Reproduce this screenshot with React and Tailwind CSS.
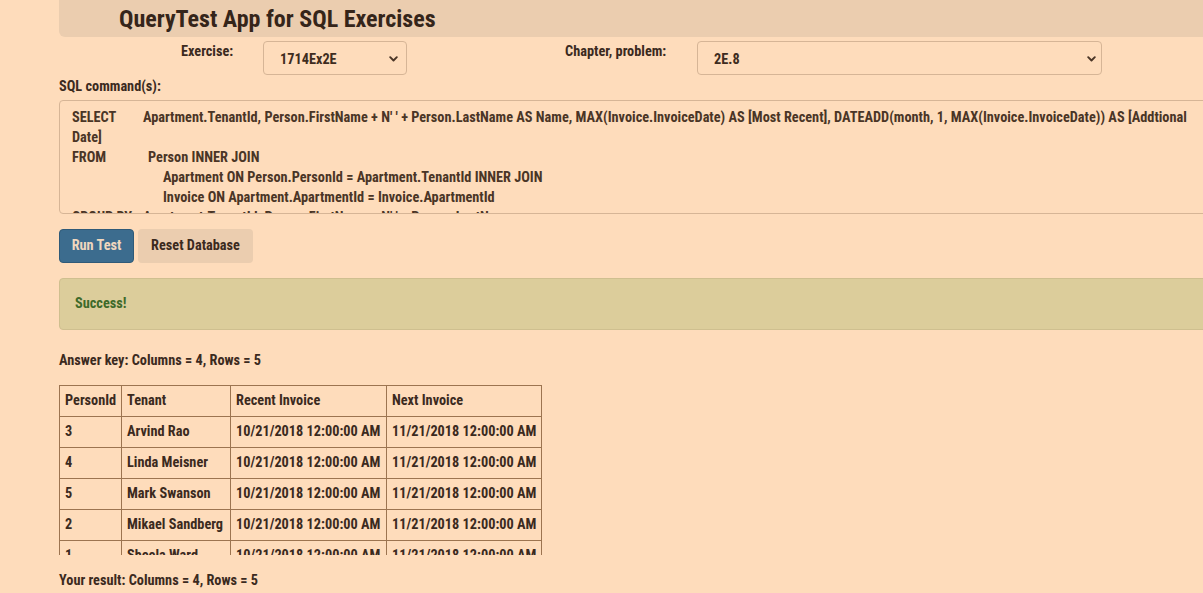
import React from "react";

const F = { fontFamily: '"Roboto Condensed", "Liberation Sans Narrow", "Arial Narrow", Roboto, sans-serif' };

function Select({ value, w, pr }) {
  return (
    <div className={`flex items-center justify-between h-[34px] rounded-[4px] border border-[#d6b596] pl-[16px] ${pr} ${w}`}>
      <span className="text-[14.3px] font-bold text-[#3e2c20] mt-[3px]">{value}</span>
      <svg width="9" height="6" viewBox="0 0 9 6" className="mt-[1px]">
        <path d="M1.2 1.2 L4.5 4.5 L7.8 1.2" fill="none" stroke="#4a3526" strokeWidth="1.9" strokeLinecap="round" strokeLinejoin="round" />
      </svg>
    </div>
  );
}

const rows = [
  ["3", "Arvind Rao"],
  ["4", "Linda Meisner"],
  ["5", "Mark Swanson"],
  ["2", "Mikael Sandberg"],
  ["1", "Sheela Ward"],
];

const cell = "border border-[#9c7450] px-[5px] whitespace-nowrap";

export default function App() {
  return (
    <div style={F} className="w-[1203px] h-[593px] overflow-hidden bg-[#fedcbb] text-[#3b2a1e] font-bold text-[14.3px]">
      <div className="ml-[59px] w-[1200px]">
        <div className="h-[37px] bg-[#ebcdaf] rounded-bl-[6px] pl-[60px] flex items-center">
          <h1 className="text-[24px] leading-none font-bold text-[#35251a]">QueryTest App for SQL Exercises</h1>
        </div>
        <div className="flex mt-[4px] h-[34px]">
          <div className="w-[204px] pl-[122px] pt-[2px] leading-[16px] whitespace-nowrap">Exercise:</div>
          <Select value="1714Ex2E" w="w-[144px]" pr="pr-[8px]" />
          <div className="w-[290px] pl-[158px] pt-[2px] leading-[16px] whitespace-nowrap">Chapter, problem:</div>
          <Select value="2E.8" w="w-[405px]" pr="pr-[5px]" />
        </div>
        <div className="mt-[3px] leading-[16px]">SQL command(s):</div>
        <div className="mt-[6px] h-[114px] border border-[#d6b596] rounded-[4px] overflow-hidden pl-[12px] pt-[6px] leading-[20px] text-[#4a3526] whitespace-nowrap">
          <div className="flex">
            <span className="w-[71px] shrink-0">SELECT</span>
            <span>Apartment.TenantId, Person.FirstName + N' ' + Person.LastName AS Name, MAX(Invoice.InvoiceDate) AS [Most Recent], DATEADD(month, 1, MAX(Invoice.InvoiceDate)) AS [Addtional</span>
          </div>
          <div>Date]</div>
          <div className="flex">
            <span className="w-[76px] shrink-0">FROM</span>
            <span>Person INNER JOIN</span>
          </div>
          <div className="pl-[91px]">Apartment ON Person.PersonId = Apartment.TenantId INNER JOIN</div>
          <div className="pl-[91px]">Invoice ON Apartment.ApartmentId = Invoice.ApartmentId</div>
          <div className="flex">
            <span className="w-[71px] shrink-0">GROUP BY</span>
            <span>Apartment.TenantId, Person.FirstName + N' ' + Person.LastName</span>
          </div>
        </div>
        <div className="flex gap-[4px] mt-[15px]">
          <button className="h-[34px] w-[75px] rounded-[4px] bg-[#3c6c8e] text-[#f0d7be] font-bold border border-[#2f5a78] whitespace-nowrap">Run Test</button>
          <button className="h-[34px] w-[115px] rounded-[4px] bg-[#ebcdaf] text-[#3b2a1e] font-bold whitespace-nowrap">Reset Database</button>
        </div>
        <div className="mt-[15px] h-[52px] rounded-[4px] border border-[#cfbf8f] bg-[#dccd9b] flex items-center pl-[15px] text-[#3f6a2a]">
          Success!
        </div>
        <div className="mt-[22px] leading-[16px]">Answer key: Columns = 4, Rows = 5</div>
        <div className="mt-[17px] h-[170px] overflow-hidden w-[483px]">
          <table className="border-collapse table-fixed w-[482px]">
            <colgroup>
              <col className="w-[62px]" />
              <col className="w-[109px]" />
              <col className="w-[156px]" />
              <col className="w-[155px]" />
            </colgroup>
            <thead>
              <tr className="h-[31px]">
                <th className={`${cell} text-left font-bold`}>PersonId</th>
                <th className={`${cell} text-left font-bold`}>Tenant</th>
                <th className={`${cell} text-left font-bold`}>Recent Invoice</th>
                <th className={`${cell} text-left font-bold`}>Next Invoice</th>
              </tr>
            </thead>
            <tbody>
              {rows.map(([id, name]) => (
                <tr key={id} className="h-[31px]">
                  <td className={cell}>{id}</td>
                  <td className={cell}>{name}</td>
                  <td className={cell}>10/21/2018 12:00:00 AM</td>
                  <td className={cell}>11/21/2018 12:00:00 AM</td>
                </tr>
              ))}
            </tbody>
          </table>
        </div>
        <div className="mt-[17px] leading-[16px]">Your result: Columns = 4, Rows = 5</div>
      </div>
    </div>
  );
}
